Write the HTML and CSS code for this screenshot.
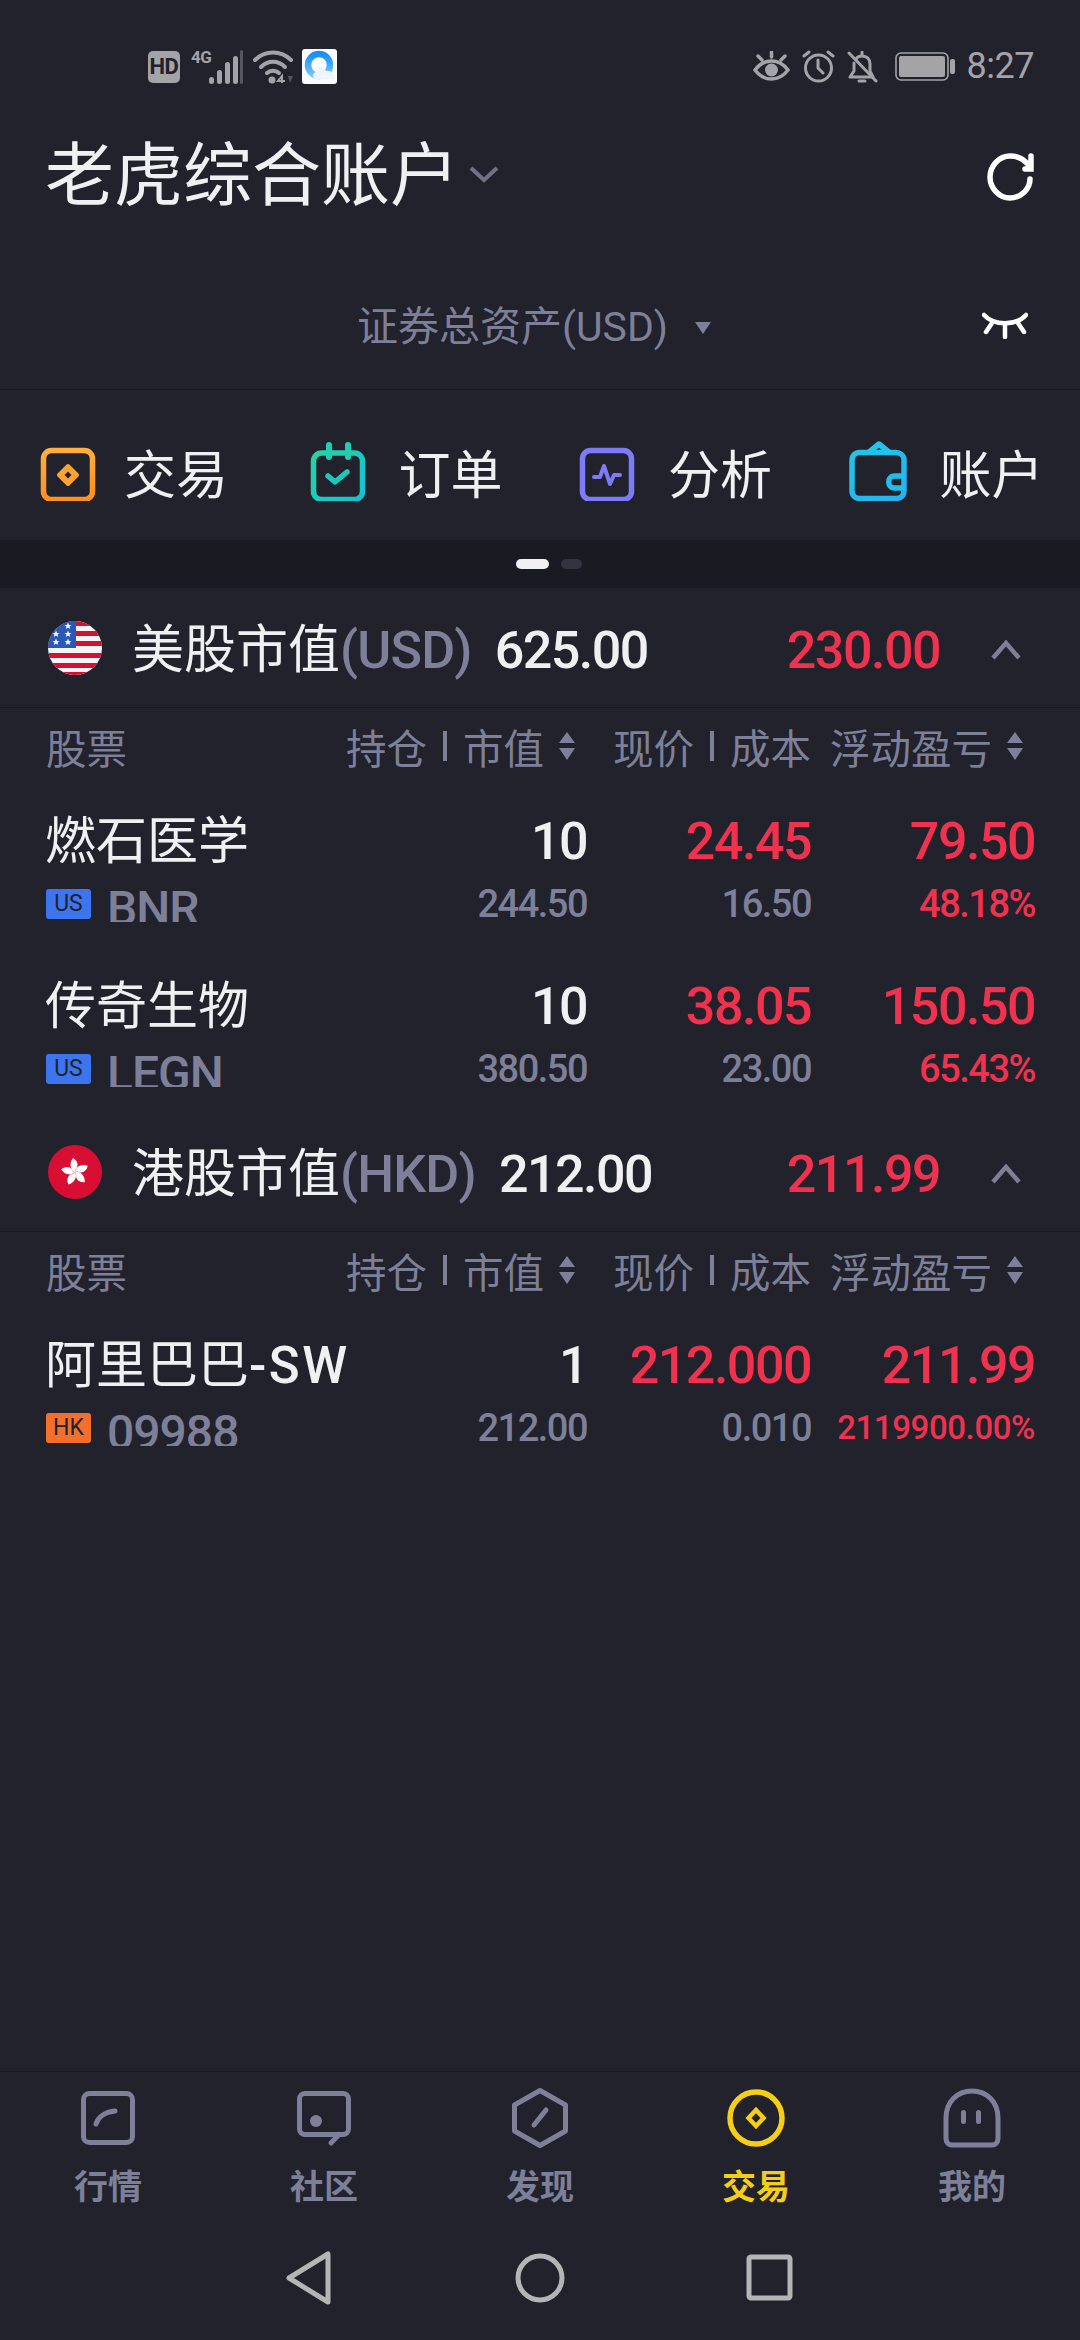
FILE: index.html
```html
<!DOCTYPE html>
<html lang="zh">
<head>
<meta charset="utf-8">
<title>老虎综合账户</title>
<link rel="stylesheet" href="styles.css">
</head>
<body>
<div class="status">
  <div class="status-left">
    <span class="hd">HD</span>
    <span class="net">4G</span>
    <svg class="signal" width="34" height="34" viewBox="0 0 34 34"><g fill="#a3a3a8"><rect x="0" y="27" width="5" height="7" rx="2.5"/><rect x="8" y="20" width="5" height="14" rx="2.5"/><rect x="16" y="12" width="5" height="22" rx="2.5"/><rect x="24" y="6" width="5" height="28" rx="2.5"/></g><rect x="31" y="0" width="3" height="34" rx="1.5" fill="#55565e"/></svg>
    <svg class="wifi" width="40" height="34" viewBox="0 0 40 34"><g fill="none" stroke="#a3a3a8" stroke-width="4" stroke-linecap="round"><path d="M2 10C12 0 28 0 38 10"/><path d="M8 17C15 10 25 10 32 17"/><path d="M14 23C17 20 23 20 26 23"/></g><circle cx="19" cy="30" r="3.5" fill="#a3a3a8"/><path d="M29 33V26L25 31H32" fill="none" stroke="#a3a3a8" stroke-width="2"/><path d="M35 26L40 26L37 33Z" fill="#55565e"/></svg>
    <svg class="qq" width="35" height="35" viewBox="0 0 35 35"><defs><linearGradient id="q1" x1="0" y1="0" x2="0" y2="1"><stop offset="0" stop-color="#1590f5"/><stop offset="1" stop-color="#7cc4fa"/></linearGradient></defs><rect width="35" height="35" rx="3" fill="#f8fbff"/><circle cx="17" cy="16" r="11" fill="none" stroke="url(#q1)" stroke-width="6.500"/><path d="M14 30C10 29 10 24 14 23C15 18 22 17 24 22C28 21 33 24 32 30Z" fill="#eef5fc"/></svg>
  </div>
  <div class="status-right">
    <svg width="37" height="31" viewBox="0 0 37 31"><g fill="none" stroke="#a3a3a8" stroke-width="3.5" stroke-linecap="round"><path d="M2 19C11 7 26 7 35 19C26 31 11 31 2 19Z"/><path d="M18.5 1V6M5 5L9 9M32 5L28 9"/></g><circle cx="18.5" cy="19" r="6.5" fill="#a3a3a8"/></svg>
    <svg width="33" height="33" viewBox="0 0 33 33"><g fill="none" stroke="#a3a3a8" stroke-width="3" stroke-linecap="round"><circle cx="16.5" cy="18" r="13"/><path d="M16 10V18L21 23M2 6L7 2M31 6L26 2"/></g></svg>
    <svg width="31" height="32" viewBox="0 0 31 32"><g fill="none" stroke="#a3a3a8" stroke-width="3" stroke-linecap="round" stroke-linejoin="round"><path d="M3 26H26L23 20V13C23 8 20 5 15 5C12 5 10 6 9 8M7 12V20L3 26"/><path d="M2 2L29 30M12 30H18M15 1V4"/></g></svg>
    <svg class="battery" width="60" height="29" viewBox="0 0 60 29"><rect x="1" y="1" width="52" height="27" rx="5" fill="none" stroke="#a3a3a8" stroke-width="1.6"/><rect x="4" y="4" width="46" height="21" rx="2" fill="#a3a3a8"/><rect x="55" y="7" width="5" height="15" rx="2" fill="#a3a3a8"/></svg>
    <span class="clock">8:27</span>
  </div>
</div>

<header class="title-row">
  <h1 class="title">老虎综合账户</h1>
  <svg class="title-caret" width="30" height="18" viewBox="0 0 30 18"><path d="M2 3L15 15L28 3" fill="none" stroke="#6f7289" stroke-width="4"/></svg>
  <svg class="refresh" width="48" height="50" viewBox="0 0 48 50"><g fill="none" stroke="#fff" stroke-width="5.500" stroke-linecap="round"><path d="M43 14C39 8 32 4 24 4C13 4 4 14 4 25C4 36 13 46 24 46C35 46 44 37 44 27"/><path d="M45 4V17H39"/></g></svg>
</header>

<div class="asset-row">
  <div class="asset-label">证券总资产(USD)</div>
  <svg class="asset-caret" width="18" height="14" viewBox="0 0 18 14"><path d="M1 1H17L9 13Z" fill="#7d8098"/></svg>
  <svg class="eye" width="46" height="28" viewBox="0 0 46 28"><g fill="none" stroke="#fff" stroke-width="4.5" stroke-linecap="round"><path d="M2 4C12 15 34 15 44 4"/><path d="M23 14V26M10 12L4 21M36 12L42 21"/></g></svg>
</div>

<nav class="actions">
  <a class="action">
    <svg class="action-icon" width="56" height="60" viewBox="0 0 56 60"><defs><linearGradient id="g1" x1="0" y1="0" x2="0" y2="1"><stop offset="0" stop-color="#ffb03a"/><stop offset="1" stop-color="#ff8f20"/></linearGradient></defs><rect x="3.500" y="9.500" width="49" height="49" rx="8" fill="none" stroke="url(#g1)" stroke-width="5.500"/><path d="M28 25L37 34L28 43L19 34Z" fill="#ffa32f" stroke="#ffa32f" stroke-width="4" stroke-linejoin="round"/><path d="M28 30.500L31.500 34L28 37.500L24.500 34Z" fill="#21222c"/></svg>
    <span>交易</span>
  </a>
  <a class="action">
    <svg class="action-icon" width="56" height="60" viewBox="0 0 56 60"><defs><linearGradient id="g2" x1="0" y1="0" x2="1" y2="1"><stop offset="0" stop-color="#25d3a5"/><stop offset="1" stop-color="#14c1d4"/></linearGradient></defs><rect x="3.500" y="12" width="49" height="46.500" rx="8" fill="none" stroke="url(#g2)" stroke-width="5.500"/><path d="M19 4V16M38 4V16" stroke="#20cfb0" stroke-width="6" stroke-linecap="round"/><path d="M18 35L25 41L37 31" fill="none" stroke="#1bc9bc" stroke-width="5.500" stroke-linecap="round" stroke-linejoin="round"/></svg>
    <span>订单</span>
  </a>
  <a class="action">
    <svg class="action-icon" width="56" height="60" viewBox="0 0 56 60"><rect x="3.500" y="9.500" width="49" height="49" rx="8" fill="none" stroke="#7d7bf8" stroke-width="5.500"/><path d="M15 36H21L25 25L31 43L35 34H41" fill="none" stroke="#7d7bf8" stroke-width="4" stroke-linecap="round" stroke-linejoin="round"/></svg>
    <span>分析</span>
  </a>
  <a class="action">
    <svg class="action-icon wallet" width="58" height="60" viewBox="0 0 58 60"><defs><linearGradient id="g4" x1="0" y1="0" x2="1" y2="1"><stop offset="0" stop-color="#22c5e8"/><stop offset="1" stop-color="#26b1ee"/></linearGradient></defs><path d="M11 14H47C51 14 55 17 55 21V52C55 57 52 60 47 60H11C6 60 3 57 3 52V22C3 17 6 14 11 14Z" transform="translate(0 -2.500)" fill="none" stroke="url(#g4)" stroke-width="5.500"/><path d="M19 12L30 3L41 12" fill="none" stroke="#22c5e8" stroke-width="5.500" stroke-linejoin="round"/><path d="M55 35H45C38 35 38 47 45 47H55" fill="none" stroke="#22bdec" stroke-width="5.500"/></svg>
    <span>账户</span>
  </a>
</nav>

<div class="pager"><i class="dot on"></i><i class="dot"></i></div>

<main class="main">
  <section class="market">
    <div class="market-head">
      <svg class="flag" width="54" height="54" viewBox="0 0 54 54"><defs><clipPath id="c1"><circle cx="27" cy="27" r="27"/></clipPath><path id="star" d="M0-3.600L1-1.100L3.500-1.100L1.500.500L2.200 3.100L0 1.600L-2.200 3.100L-1.500.500L-3.500-1.100L-1-1.100Z" fill="#fff"/></defs><g clip-path="url(#c1)"><rect width="54" height="54" fill="#f5f5f7"/><g fill="#d3122f"><rect y="0" width="54" height="5"/><rect y="10" width="54" height="5"/><rect y="20" width="54" height="5"/><rect y="32" width="54" height="5"/><rect y="42" width="54" height="5"/><rect y="51" width="54" height="4"/></g><rect width="28" height="27" fill="#2a58b6"/><use href="#star" x="20" y="5"/><use href="#star" x="8" y="13"/><use href="#star" x="20" y="13"/><use href="#star" x="8" y="21"/><use href="#star" x="20" y="21"/></g></svg>
      <span class="market-name">美股市值<em>(USD)</em></span>
      <span class="num market-value">625.00</span>
      <span class="num up market-pnl">230.00</span>
      <svg class="collapse" width="32" height="20" viewBox="0 0 32 20"><path d="M3 18L16 3L29 18" fill="none" stroke="#7d8098" stroke-width="4.500"/></svg>
    </div>
    <div class="grid col-head">
      <span class="c-name">股票</span>
      <span class="c-r c-pad1">持仓<i class="sep"></i>市值<svg class="sort" width="16" height="28" viewBox="0 0 16 28"><path d="M8 0L16 11H0ZM8 28L16 16H0Z" fill="#7d8098"/></svg></span>
      <span class="c-r">现价<i class="sep"></i>成本</span>
      <span class="c-r c-pad2">浮动盈亏<svg class="sort" width="16" height="28" viewBox="0 0 16 28"><path d="M8 0L16 11H0ZM8 28L16 16H0Z" fill="#7d8098"/></svg></span>
    </div>
    <div class="rows">
      <div class="grid stock">
        <div class="name">燃石医学</div>
        <div class="num qty">10</div>
        <div class="num up">24.45</div>
        <div class="num up">79.50</div>
        <div class="code"><b class="tag us">US</b><span class="ticker">BNR</span></div>
        <div class="sub">244.50</div>
        <div class="sub">16.50</div>
        <div class="sub up">48.18%</div>
      </div>
      <div class="grid stock">
        <div class="name">传奇生物</div>
        <div class="num qty">10</div>
        <div class="num up">38.05</div>
        <div class="num up">150.50</div>
        <div class="code"><b class="tag us">US</b><span class="ticker">LEGN</span></div>
        <div class="sub">380.50</div>
        <div class="sub">23.00</div>
        <div class="sub up">65.43%</div>
      </div>
    </div>
  </section>

  <section class="market">
    <div class="market-head">
      <svg class="flag" width="54" height="54" viewBox="0 0 54 54"><circle cx="27" cy="27" r="27" fill="#d80f32"/><g fill="#fff"><path d="M27 27C22 25 21 18 25 13C29 15 31 20 28.500 23C27.500 24 27 25 27 27Z"/><path d="M27 27C22 25 21 18 25 13C29 15 31 20 28.500 23C27.500 24 27 25 27 27Z" transform="rotate(72 27 27)"/><path d="M27 27C22 25 21 18 25 13C29 15 31 20 28.500 23C27.500 24 27 25 27 27Z" transform="rotate(144 27 27)"/><path d="M27 27C22 25 21 18 25 13C29 15 31 20 28.500 23C27.500 24 27 25 27 27Z" transform="rotate(216 27 27)"/><path d="M27 27C22 25 21 18 25 13C29 15 31 20 28.500 23C27.500 24 27 25 27 27Z" transform="rotate(288 27 27)"/></g></svg>
      <span class="market-name">港股市值<em>(HKD)</em></span>
      <span class="num market-value">212.00</span>
      <span class="num up market-pnl">211.99</span>
      <svg class="collapse" width="32" height="20" viewBox="0 0 32 20"><path d="M3 18L16 3L29 18" fill="none" stroke="#7d8098" stroke-width="4.500"/></svg>
    </div>
    <div class="grid col-head">
      <span class="c-name">股票</span>
      <span class="c-r c-pad1">持仓<i class="sep"></i>市值<svg class="sort" width="16" height="28" viewBox="0 0 16 28"><path d="M8 0L16 11H0ZM8 28L16 16H0Z" fill="#7d8098"/></svg></span>
      <span class="c-r">现价<i class="sep"></i>成本</span>
      <span class="c-r c-pad2">浮动盈亏<svg class="sort" width="16" height="28" viewBox="0 0 16 28"><path d="M8 0L16 11H0ZM8 28L16 16H0Z" fill="#7d8098"/></svg></span>
    </div>
    <div class="rows">
      <div class="grid stock">
        <div class="name">阿里巴巴<span class="latin">-SW</span></div>
        <div class="num qty">1</div>
        <div class="num up">212.000</div>
        <div class="num up">211.99</div>
        <div class="code"><b class="tag hk">HK</b><span class="ticker">09988</span></div>
        <div class="sub">212.00</div>
        <div class="sub">0.010</div>
        <div class="sub up small">2119900.00%</div>
      </div>
    </div>
  </section>
</main>

<footer class="tabs">
  <a class="tab">
    <svg width="60" height="60" viewBox="0 0 60 60"><g fill="none" stroke="#7d8098" stroke-width="5"><rect x="5.500" y="5.500" width="49" height="49" rx="6"/><path d="M18 36C20 29 27 24 37 23" stroke-linecap="round"/></g></svg>
    <span>行情</span>
  </a>
  <a class="tab">
    <svg width="60" height="60" viewBox="0 0 60 60"><path d="M11 5.500H49C52 5.500 54.500 8 54.500 11V41C54.500 44 52 46.500 49 46.500H11C8 46.500 5.500 44 5.500 41V11C5.500 8 8 5.500 11 5.500ZM45 46.500L37 55" fill="none" stroke="#7d8098" stroke-width="5" stroke-linecap="round"/><circle cx="22" cy="33" r="6" fill="#7d8098"/></svg>
    <span>社区</span>
  </a>
  <a class="tab">
    <svg width="60" height="60" viewBox="0 0 60 60"><g fill="none" stroke="#7d8098" stroke-width="5" stroke-linejoin="round"><path d="M30 2.500L55.500 17V43L30 57.500L4.500 43V17Z"/><path d="M24 37L36 22" stroke-linecap="round"/></g></svg>
    <span>发现</span>
  </a>
  <a class="tab active">
    <svg width="60" height="60" viewBox="0 0 60 60"><circle cx="30" cy="30" r="26" fill="none" stroke="#f5ce15" stroke-width="5.500"/><path d="M30 22L37.500 30L30 38L22.500 30Z" fill="none" stroke="#f5ce15" stroke-width="4.500"/></svg>
    <span>交易</span>
  </a>
  <a class="tab">
    <svg width="60" height="60" viewBox="0 0 60 60"><path d="M10 57C6 57 4 54 4 50V30C4 14 15 3 30 3C45 3 56 14 56 30V50C56 54 54 57 50 57Z" fill="none" stroke="#7d8098" stroke-width="5"/><rect x="19" y="22" width="5" height="14" rx="2.500" fill="#7d8098"/><rect x="34" y="22" width="5" height="14" rx="2.500" fill="#7d8098"/></svg>
    <span>我的</span>
  </a>
</footer>

<div class="sysnav">
  <svg width="60" height="60" viewBox="0 0 60 60"><path d="M10 30L49 6V54Z" fill="none" stroke="#b5b5b5" stroke-width="5" stroke-linejoin="round"/></svg>
  <svg width="60" height="60" viewBox="0 0 60 60"><circle cx="30" cy="30" r="22" fill="none" stroke="#b5b5b5" stroke-width="5"/></svg>
  <svg width="60" height="60" viewBox="0 0 60 60"><rect x="8" y="9" width="41" height="41" rx="2" fill="none" stroke="#b5b5b5" stroke-width="5"/></svg>
</div>
</body>
</html>
```
FILE: styles.css
```css
* { box-sizing: border-box; }
html, body { margin: 0; padding: 0; }
body {
  width: 1080px;
  height: 2340px;
  overflow: hidden;
  display: flex;
  flex-direction: column;
  background: #21222c;
  color: #f0f0f2;
  font-family: Roboto, "Noto Sans CJK SC", sans-serif;
}
svg { display: block; flex: none; }

/* status bar */
.status {
  height: 102px;
  padding: 49px 46px 0 148px;
  display: flex;
  justify-content: space-between;
  align-items: flex-start;
  color: #a3a3a8;
}
.status-left, .status-right { display: flex; align-items: center; height: 35px; }
.hd {
  width: 32px;
  height: 32px;
  background: #a3a3a8;
  color: #21222c;
  border-radius: 5px;
  font: 700 22px/32px Roboto, sans-serif;
  letter-spacing: -0.5px;
  text-align: center;
}
.net { font: 700 17px/17px Roboto, sans-serif; margin: -18px -2px 0 11px; width: 20px; letter-spacing: -0.5px; }
.signal { margin-right: 10px; }
.wifi { margin-right: 9px; }
.status-right { gap: 12px; }
.battery { margin-left: 5px; }
.clock { font: 400 36px/35px Roboto, sans-serif; letter-spacing: -0.5px; }

/* title */
.title-row {
  height: 150px;
  padding: 0 46px 0 45px;
  display: flex;
  align-items: center;
}
.title { margin: 0; font-size: 69px; font-weight: 400; line-height: 80px; }
.title-caret { margin: -6px 0 0 10px; }
.refresh { margin-left: auto; }

.asset-row {
  height: 138px;
  padding: 12px 50px 0 357px;
  display: flex;
  align-items: center;
  border-bottom: 1px solid #191a21;
}
.asset-label { font-size: 41px; color: #7d8098; line-height: 50px; }
.asset-caret { margin-left: 26px; margin-top: 2px; }
.eye { margin-left: auto; margin-top: -4px; margin-right: 2px; }

/* quick actions */
.actions {
  height: 150px;
  padding: 12px 0 0 40px;
  display: grid;
  grid-template-columns: repeat(4, 269.5px);
  align-items: center;
}
.action { display: flex; align-items: center; gap: 33px; font-size: 52px; line-height: 60px; }
.action:first-child { gap: 28px; }
.action span { margin-top: 12px; }

.pager {
  height: 48px;
  padding-left: 18px;
  background: #1a1b22;
  display: flex;
  justify-content: center;
  align-items: center;
  gap: 12px;
}
.dot { display: block; width: 21px; height: 10px; border-radius: 5px; background: #32343f; }
.dot.on { width: 33px; background: #f0f0f2; }

.main { flex: 1; }

/* market sections */
.market-head {
  height: 120px;
  padding: 0 58px 0 48px;
  display: flex;
  align-items: center;
  border-bottom: 1px solid #191a21;
}
.flag { margin-right: 30px; }
.market-name { font-size: 52px; line-height: 60px; white-space: nowrap; margin-top: 7px; }
.market-name em { font-style: normal; font-weight: 500; color: #7d8098; letter-spacing: -0.8px; }
.market-value { margin: 7px 0 0 23px; }
.market-pnl { margin: 7px 0 0 auto; }
.collapse { margin: 5px 0 0 50px; }

.num { font-size: 52px; font-weight: 500; line-height: 70px; letter-spacing: -1.5px; text-align: right; color: #f0f0f2; }
.num.up, .sub.up { color: #f0324f; }

.grid {
  display: grid;
  grid-template-columns: 300px 1fr 224px 224px;
  padding: 0 45px 0 46px;
}
.col-head {
  height: 78px;
  padding-bottom: 2px;
  align-items: center;
  font-size: 40.5px;
  color: #7d8098;
}
.c-name { grid-column: 1; }
.c-r { display: flex; justify-content: flex-end; align-items: center; white-space: nowrap; }
.c-pad1 { grid-column: 2; padding-right: 12px; }
.c-pad2 { padding-right: 12px; }
.sep { display: block; width: 4px; height: 30px; background: #7d8098; margin: 0 16px; }
.sort { margin-left: 15px; }

.rows { display: flex; flex-direction: column; gap: 4px; }
.stock {
  height: 161px;
  padding-top: 21px;
  grid-template-rows: 70px 50px;
  row-gap: 2px;
}
.name { font-size: 51px; line-height: 70px; white-space: nowrap; margin-left: -1px; }
.latin { font-weight: 500; letter-spacing: 2.500px; }
.code { display: flex; align-items: flex-start; height: 43px; overflow: hidden; }
.tag {
  width: 45px;
  height: 30px;
  margin-top: 10px;
  border-radius: 3px;
  color: #21222c;
  font: 400 23px/30px Roboto, sans-serif;
  text-align: center;
}
.tag.us { background: #3d75ee; }
.tag.hk { background: #f4702a; }
.ticker { margin-left: 16px; font-size: 48px; font-weight: 500; line-height: 59px; color: #7d8098; letter-spacing: -1px; }
.sub { font-size: 38px; font-weight: 500; line-height: 50px; color: #7d8098; text-align: right; letter-spacing: -1.500px; }
.sub.small { font-size: 33px; letter-spacing: -0.4px; }

/* bottom tabs */
.tabs {
  height: 141px;
  padding-top: 16px;
  display: grid;
  grid-template-columns: repeat(5, 216px);
  border-top: 1px solid #191a21;
}
.tab {
  display: flex;
  flex-direction: column;
  align-items: center;
  gap: 19px;
  font-size: 34px;
  font-weight: 700;
  line-height: 40px;
  color: #7d8098;
}
.tab.active { color: #f5ce15; }

.sysnav {
  height: 128px;
  padding-top: 36px;
  display: flex;
  justify-content: center;
  gap: 171px;
}
```
